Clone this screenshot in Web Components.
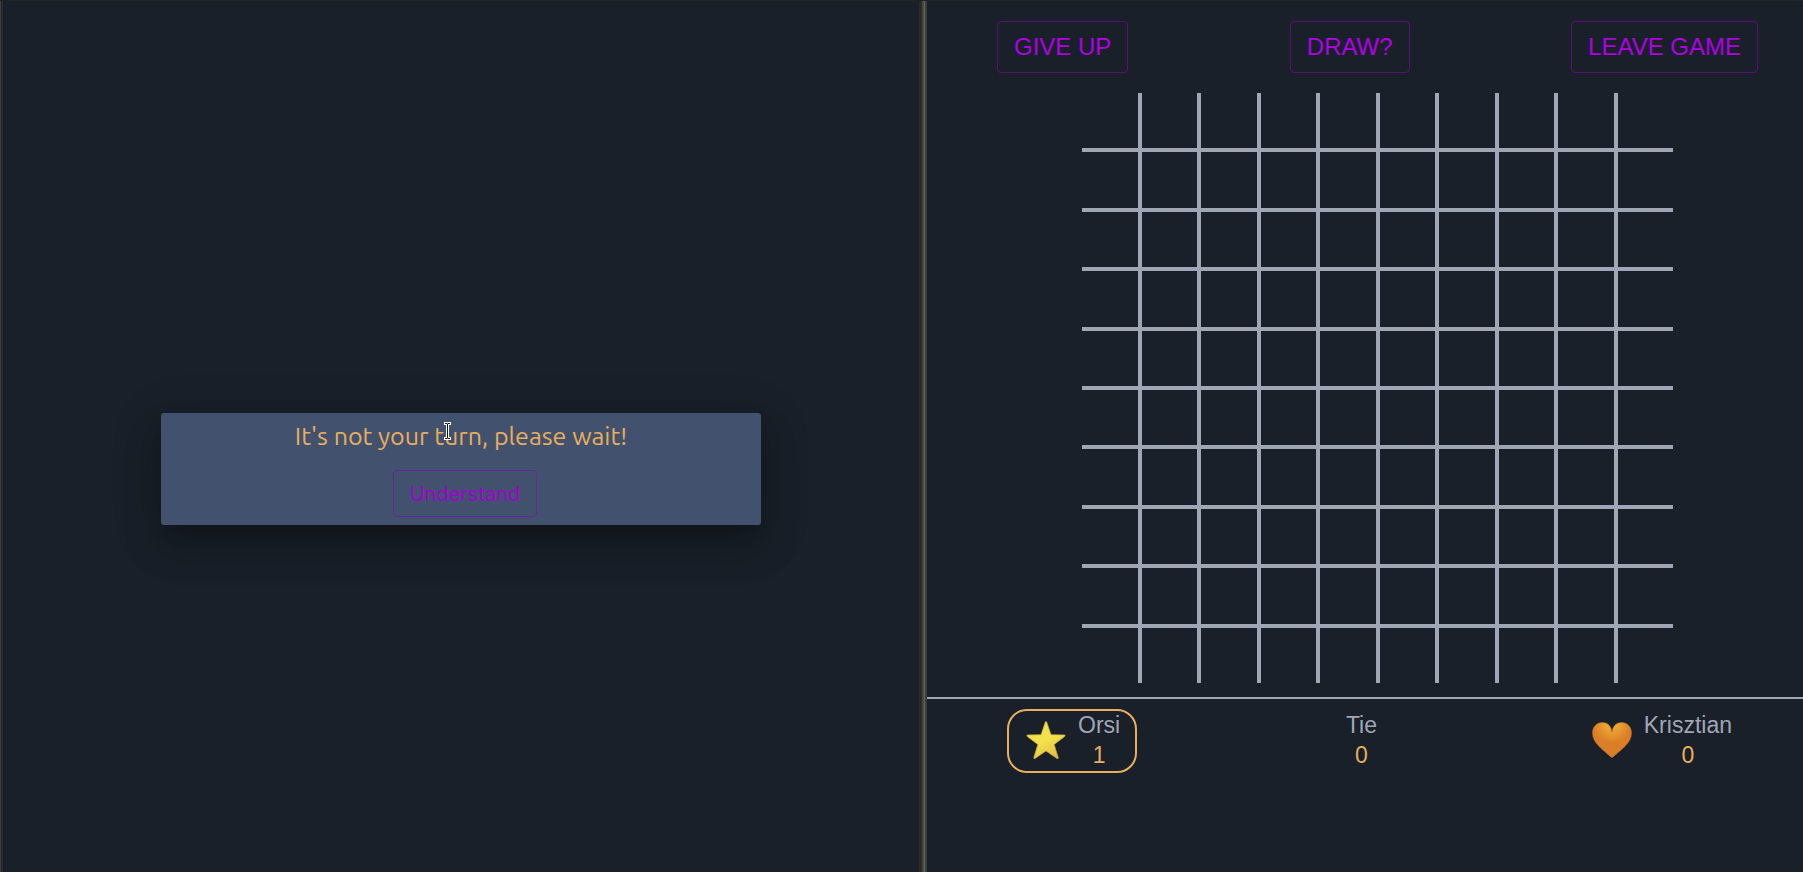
<!DOCTYPE html>
<html lang="en">
<head>
<meta charset="utf-8">
<title>Tic Tac Toe</title>
<style>
html,body{margin:0;min-height:100vh;background:#192029}
body{font-family:"Liberation Sans",Arial,sans-serif;font-size:23px;line-height:30px;color:#9fa6b4}
</style>
</head>
<body>
<game-app></game-app>
<script>
function define(name, html){
  customElements.define(name, class extends HTMLElement{
    constructor(){
      super();
      const t=document.createElement('template');
      t.innerHTML=html;
      this.attachShadow({mode:'open'}).append(t.content.cloneNode(true));
    }
  });
}

define('game-button',`<style>
:host{display:block}
button{display:block;box-sizing:border-box;height:var(--button-height,52px);padding:0 16px;border:1px solid #5c0f78;border-radius:4px;background:transparent;color:#b000e4;font-family:inherit;font-size:var(--button-size,24px);line-height:30px;cursor:pointer}
:host([soft]) button{border-color:#66279a;color:#a000d0}
</style><button type="button"><slot></slot></button>`);

define('turn-dialog',`<style>
:host{display:block;position:relative;box-sizing:border-box;width:100%;max-width:600px;height:112px;padding-top:8px;border-radius:3px;background:#42526e;font-family:Ubuntu,"Noto Sans",sans-serif;
box-shadow:0 11px 15px -7px rgba(0,0,0,.2),0 24px 38px 3px rgba(0,0,0,.14),0 9px 46px 8px rgba(0,0,0,.12)}
p{margin:0 0 19px;text-align:center;font-size:25px;line-height:30px;color:#e8ae5e}
.actions{display:flex;justify-content:center;padding-left:8px;font-family:Inter,sans-serif}
game-button{--button-height:47px;--button-size:20px}
svg{position:absolute;left:282px;top:8px}
</style>
<p><slot></slot></p>
<div class="actions"><game-button soft>Understand</game-button></div>
<svg width="9" height="20" viewBox="0 0 9 20" aria-hidden="true"><path d="M1 1h3l.5.5L5 1h3v3H6v12h2v3H5l-.5-.5L4 19H1v-3h2V4H1z" fill="#fff"/><path d="M2 2.500h2l.5.5.5-.5h2M4.500 3v14M2 17.500h2l.5-.5.5.5h2" fill="none" stroke="#111" stroke-width="1"/></svg>`);

define('game-board',`<style>
:host{display:grid;grid-template:repeat(10,1fr)/repeat(10,1fr);gap:4px;box-sizing:border-box;width:100%;max-width:591px;height:590px;background:#9fa6b4}
i{background:#192029}
</style>`+'<i></i>'.repeat(100));

define('player-score',`<style>
:host{display:flex;align-items:center;box-sizing:border-box;height:64px;padding:0 15px;border:2px solid transparent;border-radius:20px;text-align:center}
:host([active]){border-color:#e8ae5e}
:host([plain]){padding:0 0 0 3px}
.info{margin-left:10px;padding-bottom:2px}
.score{color:#e8ae5e}
</style><slot name="icon"></slot><div class="info"><slot></slot><div class="score"><slot name="score"></slot></div></div>`);

define('star-icon',`<style>:host{display:block;width:44px;height:44px}svg{display:block}</style>
<svg width="44" height="44" viewBox="0 0 44 44" aria-hidden="true"><defs><linearGradient id="g" x1=".25" y1="0" x2=".75" y2="1"><stop stop-color="#eee24e"/><stop offset=".5" stop-color="#f3e24c"/><stop offset="1" stop-color="#e2b944"/></linearGradient></defs><path d="M21.300 3Q22 1.700 22.700 3L27 15.700l13.400.2q1.500.3.300 1.600L30.200 25.500l4 13q.2 1.700-1.200 1L22 32l-11 7.500q-1.400.7-1.200-1l4-13L3.300 17.500q-1.200-1.300.3-1.600L17 15.700z" fill="url(#g)" stroke="#c4a43c" stroke-width=".7"/></svg>`);

define('heart-icon',`<style>:host{display:block;width:44px;height:44px}svg{display:block}</style>
<svg width="44" height="44" viewBox="0 0 44 44" aria-hidden="true"><defs><radialGradient id="g" gradientUnits="userSpaceOnUse" cx="22" cy="5" r="24"><stop offset=".2" stop-color="#eba632"/><stop offset=".45" stop-color="#e6972e"/><stop offset=".8" stop-color="#dc7d27"/></radialGradient></defs><path d="M22 13.500C22.500 7.500 26 3.500 31.500 3.500C37.500 3.500 41.500 8 41.500 14C41.500 24.500 30.500 31 23 38q-1 .9-2 0C13.500 31 2.500 24.500 2.500 14C2.500 8 6.500 3.500 12.500 3.500C18 3.500 21.500 7.500 22 13.500z" fill="url(#g)" stroke="#b9742a" stroke-width=".5"/></svg>`);

define('game-app',`<style>
:host{display:grid;grid-template-columns:minmax(0,919fr) 8px minmax(0,876fr);box-sizing:border-box;min-height:100vh;border-top:1px solid #1e2325}
aside{display:flex;justify-content:center;align-items:flex-start;padding:412px 0 0 3px;background:linear-gradient(90deg,#3c3c38 1px,#262a2b 1px 3px,transparent 3px)}
.divider{background:linear-gradient(90deg,#2a2a28 3px,#484744 3px 5px,#66645f 5px 6px,#3d3c39 6px)}
nav{display:flex;justify-content:space-between;padding:20px 45px 20px 70px}
.board{display:flex;justify-content:center;padding:0 0 14px 25px}
.scores{display:flex;justify-content:space-between;padding:10px 54px 0 80px;border-top:2px solid #9fa6b4}
</style>
<aside><turn-dialog role="dialog" aria-label="Turn notice">It's not your turn, please wait!</turn-dialog></aside>
<div class="divider"></div>
<main>
<nav><game-button>GIVE UP</game-button><game-button>DRAW?</game-button><game-button>LEAVE GAME</game-button></nav>
<div class="board"><game-board></game-board></div>
<section class="scores">
<player-score active><star-icon slot="icon"></star-icon>Orsi<span slot="score">1</span></player-score>
<player-score plain>Tie<span slot="score">0</span></player-score>
<player-score><heart-icon slot="icon"></heart-icon>Krisztian<span slot="score">0</span></player-score>
</section>
</main>`);
</script>
</body>
</html>
